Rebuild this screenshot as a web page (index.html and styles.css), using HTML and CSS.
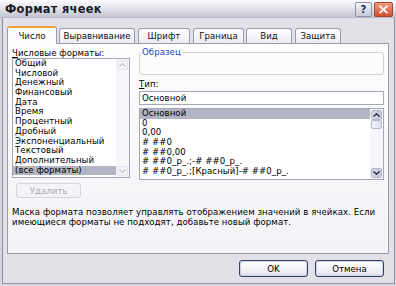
FILE: index.html
```html
<!DOCTYPE html>
<html lang="ru">
<head>
    <meta charset="UTF-8">
    <title>Формат ячеек</title>
    <link rel="stylesheet" href="styles.css">
</head>
<body>
    <div class="window">
        <div class="titlebar">
            <span class="title">Формат ячеек</span>
            <div class="caption-btns">
                <span class="cap-btn help">?</span>
                <span class="cap-btn close">
                    <svg width="11" height="9" viewBox="0 0 11 9"><path d="M1.5 0.8 L9.5 8.2 M9.5 0.8 L1.5 8.2" stroke="#fff" stroke-width="1.8" fill="none"/></svg>
                </span>
            </div>
        </div>
        <div class="frame">
            <div class="tabs">
                <div class="tab active t-num">Число</div>
                <div class="tab t-align">Выравнивание</div>
                <div class="tab t-font">Шрифт</div>
                <div class="tab t-border">Граница</div>
                <div class="tab t-view">Вид</div>
                <div class="tab t-prot">Защита</div>
            </div>
            <div class="panel">
                <div class="panel-top">
                    <div class="col-left">
                        <div class="label"><u>Ч</u>исловые форматы:</div>
                        <div class="listbox list-left">
                            <ul class="items">
                                <li>Общий</li>
                                <li>Числовой</li>
                                <li>Денежный</li>
                                <li>Финансовый</li>
                                <li>Дата</li>
                                <li>Время</li>
                                <li>Процентный</li>
                                <li>Дробный</li>
                                <li>Экспоненциальный</li>
                                <li>Текстовый</li>
                                <li>Дополнительный</li>
                                <li class="selected">(все форматы)</li>
                            </ul>
                            <div class="scrollbar off">
                                <span class="sb-btn"><svg width="7" height="4" viewBox="0 0 7 4"><path d="M0.5 3.5 L3.5 0.8 L6.5 3.5" stroke="#c4c6d2" stroke-width="1.3" fill="none"/></svg></span>
                                <span class="sb-track"></span>
                                <span class="sb-btn"><svg width="7" height="4" viewBox="0 0 7 4"><path d="M0.5 0.5 L3.5 3.2 L6.5 0.5" stroke="#c4c6d2" stroke-width="1.3" fill="none"/></svg></span>
                            </div>
                        </div>
                        <button class="btn btn-del" disabled>Удалить</button>
                    </div>
                    <div class="col-right">
                        <fieldset class="sample">
                            <legend>Образец</legend>
                        </fieldset>
                        <div class="label label-type"><u>Т</u>ип:</div>
                        <div class="input">Основной</div>
                        <div class="listbox list-right">
                            <ul class="items">
                                <li class="selected">Основной</li>
                                <li>0</li>
                                <li>0,00</li>
                                <li># ##0</li>
                                <li># ##0,00</li>
                                <li># ##0_р_.;-# ##0_р_.</li>
                                <li># ##0_р_.;[Красный]-# ##0_р_.</li>
                            </ul>
                            <div class="scrollbar">
                                <span class="sb-btn"><svg width="7" height="4" viewBox="0 0 7 4"><path d="M0.5 3.5 L3.5 0.8 L6.5 3.5" stroke="#2c2f44" stroke-width="1.4" fill="none"/></svg></span>
                                <span class="sb-thumb"></span>
                                <span class="sb-track"></span>
                                <span class="sb-btn"><svg width="7" height="4" viewBox="0 0 7 4"><path d="M0.5 0.5 L3.5 3.2 L6.5 0.5" stroke="#2c2f44" stroke-width="1.4" fill="none"/></svg></span>
                            </div>
                        </div>
                    </div>
                </div>
                <p class="hint">Маска формата позволяет управлять отображением значений в ячейках. Если<br>имеющиеся форматы не подходят, добавьте новый формат.</p>
            </div>
            <div class="footer">
                <button class="btn btn-main">OK</button>
                <button class="btn btn-main">Отмена</button>
            </div>
        </div>
    </div>
</body>
</html>
```

FILE: styles.css
```css
* { box-sizing: border-box; }
body {
    margin: 0;
    font-family: "DejaVu Sans", sans-serif;
    font-size: 8.6px;
    letter-spacing: 0.05px;
    color: #000;
    background: #d6d6de;
}
.window {
    width: 396px;
    height: 286px;
    display: flex;
    flex-direction: column;
    background: #d6d6de;
}
.titlebar {
    height: 18px;
    flex: none;
    display: flex;
    align-items: center;
    justify-content: space-between;
    padding: 0 3px 0 5px;
    background: linear-gradient(#fbfbfd, #e0e0e8 55%, #c4c4d2);
    border-bottom: 1px solid #b8b8c8;
}
.title {
    font-weight: bold;
    font-size: 11.4px;
    color: #1a1a22;
    letter-spacing: 0.3px;
}
.caption-btns { display: flex; gap: 2px; padding-top: 2px; }
.cap-btn {
    width: 17px;
    height: 15px;
    border-radius: 2px;
    display: flex;
    align-items: center;
    justify-content: center;
}
.help {
    background: linear-gradient(#f4f6fc, #c6cadb);
    border: 1px solid #8e92a8;
    color: #26304e;
    font-weight: bold;
    font-size: 10px;
}
.close {
    width: 19px;
    background: linear-gradient(#f09a80, #d4512f);
    border: 1px solid #a8452c;
}
.frame {
    flex: 1;
    margin: 0 1px 2px 2px;
    border: 1px solid #8e8fa3;
    border-top: 0;
    background: #e2e1e7;
    padding: 8px 5px 0 4px;
    display: flex;
    flex-direction: column;
}
.tabs {
    display: flex;
    align-items: flex-end;
    height: 17px;
    position: relative;
    z-index: 1;
}
.tab {
    height: 15px;
    margin-left: 2px;
    border: 1px solid #9a9cae;
    border-bottom: 0;
    border-radius: 3px 3px 0 0;
    background: linear-gradient(#ffffff, #ececf2);
    display: flex;
    align-items: center;
    justify-content: center;
    color: #111;
}
.tab.active {
    margin-left: 0;
    margin-bottom: -1px;
    height: 18px;
    background: #fcfcfe;
    border-top: 2px solid #f0a03c;
    padding-bottom: 1px;
}
.t-num { width: 50px; }
.t-align { width: 76px; }
.t-font { width: 52px; margin-left: 3px; }
.t-border { width: 51px; margin-left: 3px; }
.t-view { width: 46px; }
.t-prot { width: 46px; margin-left: 3px; }
.panel {
    height: 211px;
    border: 1px solid #9a9cae;
    background: linear-gradient(#fdfdfe, #f3f3f7);
    padding: 4px 4px 0 4px;
}
.panel-top { display: flex; gap: 9px; }
.col-left { width: 118px; display: flex; flex-direction: column; }
.col-right { flex: 1; display: flex; flex-direction: column; }
.label { height: 10px; line-height: 10px; white-space: nowrap; }
.listbox {
    border: 1px solid #a4a7b8;
    background: #fff;
    display: flex;
}
.list-left { height: 120px; }
.list-right { height: 72px; margin-top: 3px; }
.items {
    list-style: none;
    margin: 0;
    padding: 0;
    flex: 1;
    overflow: hidden;
}
.items li {
    height: 9.7px;
    line-height: 9.7px;
    padding-left: 2px;
    white-space: nowrap;
}
.items li.selected { background: #b3b5c3; }
.scrollbar {
    width: 13px;
    flex: none;
    display: flex;
    flex-direction: column;
    padding: 1px;
    background: #f6f6fa;
}
.sb-btn {
    height: 10px;
    border: 1px solid #b6b9cc;
    border-radius: 2px;
    background: linear-gradient(90deg, #d6d8e6, #c2c5d8);
    display: flex;
    align-items: center;
    justify-content: center;
}
.off .sb-btn {
    border-color: #e6e7ee;
    background: #f4f4f8;
}
.sb-thumb {
    height: 9px;
    border: 1px solid #b6b9cc;
    border-radius: 2px;
    background: linear-gradient(90deg, #f2f2f8, #dcdde8);
}
.sb-track { flex: 1; }
.btn {
    font-family: inherit;
    font-size: 8.6px;
    border-radius: 3px;
    padding: 0;
}
.btn-del {
    width: 65px;
    height: 15px;
    margin: 5px 0 0 4px;
    border: 1px solid #d4d4dc;
    background: #f4f4f6;
    color: #acacb4;
}
.sample {
    margin: 0;
    padding: 0;
    height: 27px;
    border: 1px solid #cfd0da;
    border-radius: 3px;
}
.sample legend {
    padding: 0 1px;
    margin-left: 1px;
    color: #1a48c8;
    line-height: 9px;
}
.label-type { margin-top: 4px; }
.input {
    margin-top: 2px;
    height: 14px;
    line-height: 12px;
    border: 1px solid #a4a7b8;
    background: #fff;
    padding-left: 2px;
}
.hint {
    margin: 9px 0 0 0;
    line-height: 10px;
    white-space: nowrap;
}
.footer {
    display: flex;
    justify-content: flex-end;
    gap: 7px;
    padding: 6px 5px 0 0;
}
.btn-main {
    width: 69px;
    height: 17px;
    border: 1px solid #3c4060;
    background: linear-gradient(#ffffff, #ececf2 80%, #d4d4de);
    box-shadow: inset 0 0 0 1px #c8d4f0;
    color: #000;
}
```
